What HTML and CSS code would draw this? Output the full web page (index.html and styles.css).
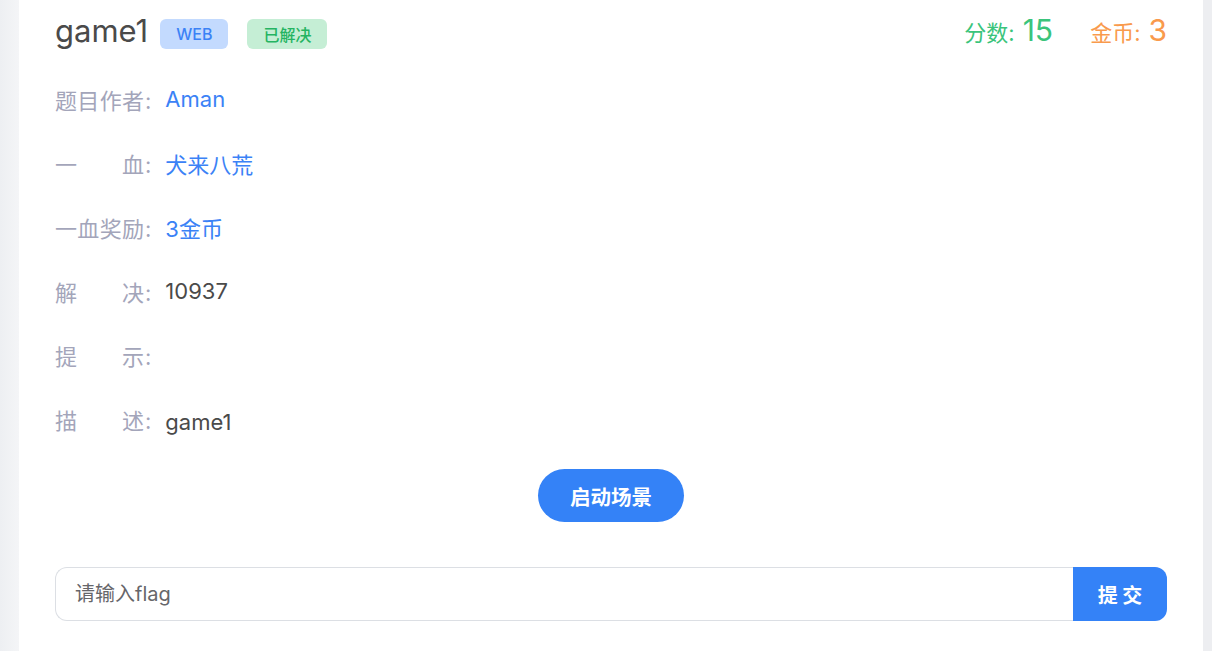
FILE: index.html
```html
<!DOCTYPE html>
<html lang="zh">
<head>
<meta charset="utf-8">
<title>game1</title>
<link rel="stylesheet" href="styles.css">
</head>
<body>
<div class="page">
  <div class="card">
    <div class="header">
      <div class="title-group">
        <h1 class="title">game1</h1>
        <span class="badge badge-blue">WEB</span>
        <span class="badge badge-green">已解决</span>
      </div>
      <div class="stats">
        <div class="stat stat-score"><span class="stat-label">分数:</span><span class="stat-value">15</span></div>
        <div class="stat stat-coin"><span class="stat-label">金币:</span><span class="stat-value">3</span></div>
      </div>
    </div>

    <div class="info">
      <div class="row"><span class="label"><span class="label-text">题目作者</span>:</span><span class="value link">Aman</span></div>
      <div class="row"><span class="label"><span class="label-text">一血</span>:</span><span class="value link">犬来八荒</span></div>
      <div class="row"><span class="label"><span class="label-text">一血奖励</span>:</span><span class="value link">3金币</span></div>
      <div class="row"><span class="label"><span class="label-text">解决</span>:</span><span class="value">10937</span></div>
      <div class="row"><span class="label"><span class="label-text">提示</span>:</span><span class="value"></span></div>
      <div class="row"><span class="label"><span class="label-text">描述</span>:</span><span class="value desc">game1</span></div>
    </div>

    <div class="launch-wrap">
      <button class="launch">启动场景</button>
    </div>

    <form class="flag-form">
      <input class="flag-input" type="text" placeholder="请输入flag">
      <button class="submit" type="button">提 交</button>
    </form>
  </div>
</div>
</body>
</html>
```

FILE: styles.css
```css
html, body {
  margin: 0;
  padding: 0;
  height: 651px;
  overflow: hidden;
}

body {
  background: #eeeff2;
  font-family: Inter, "Noto Sans CJK SC", sans-serif;
  color: #4a4a4a;
}

.page {
  display: flex;
  height: 651px;
  padding-right: 9px;
  padding-left: 19px;
  background: linear-gradient(90deg, #edeff2 0, #f4f5f7 19px, #f4f5f7 1203px, #edeef1 1203px);
}

.card {
  flex: 1;
  background: #ffffff;
  padding: 19px 36px 0 36px;
  display: flex;
  flex-direction: column;
}

.header {
  display: flex;
  justify-content: space-between;
  align-items: flex-start;
  height: 30px;
}

.title-group {
  display: flex;
  align-items: center;
  height: 30px;
}

.title {
  margin: 0 12px 0 0;
  font-size: 31px;
  font-weight: 400;
  line-height: 30px;
  color: #4a4a4a;
  position: relative;
  top: -3px;
}

.badge {
  display: inline-flex;
  align-items: center;
  height: 30px;
  padding: 0 16px;
  border-radius: 6px;
  font-size: 16px;
  font-weight: 500;
  margin-right: 19px;
}

.badge-blue {
  background: #c3dafe;
  color: #3b82f6;
}

.badge-green {
  background: #c5eed5;
  color: #25b462;
}

.stats {
  display: flex;
  align-items: baseline;
  gap: 37px;
  line-height: 30px;
  margin-top: -4px;
}

.stat {
  display: flex;
  align-items: baseline;
}

.stat-label {
  font-size: 22px;
  margin-right: 8px;
}

.stat-value {
  font-size: 30px;
}

.stat-score {
  color: #3ac47b;
}

.stat-coin {
  color: #f99a4c;
}

.info {
  margin-top: 18px;
  display: flex;
  flex-direction: column;
}

.row {
  display: flex;
  align-items: center;
  height: 64px;
  font-size: 22px;
}

.label {
  color: #a3a5ba;
  margin-right: 14px;
  white-space: nowrap;
}

.label-text {
  display: inline-block;
  width: 89px;
  text-align: justify;
  text-align-last: justify;
  margin-right: 1px;
}

.value {
  color: #4a4a4a;
}

.value.link {
  color: #3b82f6;
}

.value.desc {
  padding-top: 5px;
}

.launch-wrap {
  display: flex;
  justify-content: center;
  margin-top: 18px;
}

.launch {
  height: 53px;
  padding: 0 32px;
  border: none;
  border-radius: 27px;
  background: #3482f7;
  color: #ffffff;
  font-family: Inter, "Noto Sans CJK SC", sans-serif;
  font-size: 20.5px;
  font-weight: 700;
}

.flag-form {
  display: flex;
  margin-top: 45px;
  height: 54px;
}

.flag-input {
  flex: 1;
  box-sizing: border-box;
  height: 54px;
  border: 1px solid #dcdfe4;
  border-right: none;
  border-radius: 12px 0 0 12px;
  padding: 0 19px;
  font-family: Inter, "Noto Sans CJK SC", sans-serif;
  font-size: 20px;
  color: #4a4a4a;
  outline: none;
}

.flag-input::placeholder {
  color: #66666a;
}

.submit {
  width: 94px;
  height: 54px;
  border: none;
  border-radius: 0 12px 12px 0;
  background: #3482f7;
  color: #ffffff;
  font-family: Inter, "Noto Sans CJK SC", sans-serif;
  font-size: 20px;
  font-weight: 700;
}
```
